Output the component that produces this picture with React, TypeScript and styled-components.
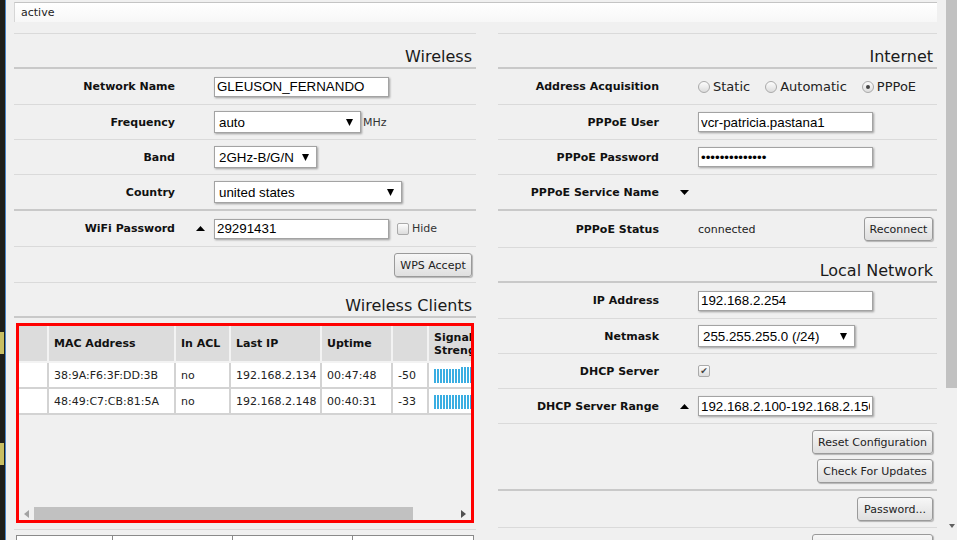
import React from 'react';
import styled, { createGlobalStyle } from 'styled-components';

const UI = `"DejaVu Sans", Verdana, sans-serif`;
const ARIAL = `"Liberation Sans", Arial, sans-serif`;

const GlobalStyle = createGlobalStyle`
  html, body { margin: 0; padding: 0; background: #f0f0f0; overflow: hidden; }
  body { font-family: ${UI}; font-size: 11px; color: #222; }
  * { box-sizing: border-box; }
`;

const Shell = styled.div`
  display: flex;
  width: 957px;
  height: 540px;
  overflow: hidden;
  background: #f0f0f0;
`;

const Sidebar = styled.div`
  flex: none;
  width: 6px;
  background: #1f1f1b;
  border-right: 1px solid #4a86c8;
  display: flex;
  flex-direction: column;
`;

const SideTab = styled.div<{ $gap: number }>`
  width: 4px;
  height: 22px;
  margin-top: ${(p) => p.$gap}px;
  background: #c9bf63;
`;

const Main = styled.main`
  flex: 1;
  min-width: 0;
  padding: 2px 9px 0 8px;
  display: flex;
  flex-direction: column;
`;

const StatusBar = styled.div`
  flex: none;
  height: 20px;
  border-top: 1px solid #c4c4c4;
  border-left: 1px solid #d6d6d6;
  background: linear-gradient(#ffffff, #f7f7f7);
  padding-left: 6px;
  font-size: 11px;
  line-height: 20px;
  color: #222;
`;

const Columns = styled.div`
  display: grid;
  grid-template-columns: 462px 439px;
  column-gap: 22px;
  align-items: start;
`;

const Column = styled.section`
  display: flex;
  flex-direction: column;
`;

const Spacer = styled.div`
  height: 12px;
  border-bottom: 1px solid #dadada;
`;

const Title = styled.h2<{ $h: number }>`
  margin: 0;
  height: ${(p) => p.$h}px;
  display: flex;
  align-items: flex-end;
  justify-content: flex-end;
  padding: 0 4px 0 0;
  border-bottom: 2px solid #c9c9c9;
  font-size: 16px;
  font-weight: normal;
  line-height: 20px;
  color: #1a1a1a;
`;

const Row = styled.div<{ $h: number; $heavy?: boolean }>`
  display: grid;
  grid-template-columns: 161px 39px 1fr;
  align-items: center;
  height: ${(p) => p.$h}px;
  padding-right: 4px;
  border-bottom: ${(p) => (p.$heavy ? '2px solid #c9c9c9' : '1px solid #dadada')};
`;

const ActionRow = styled.div<{ $h: number; $heavy?: boolean }>`
  display: flex;
  flex-direction: column;
  align-items: flex-end;
  justify-content: flex-start;
  gap: 5px;
  height: ${(p) => p.$h}px;
  padding: 6px 4px 0 0;
  border-bottom: ${(p) => (p.$heavy ? '2px solid #c9c9c9' : '1px solid #dadada')};
`;

const Label = styled.div`
  text-align: right;
  font-weight: bold;
  font-size: 11px;
  color: #111;
  white-space: nowrap;
`;

const ArrowCell = styled.div`
  display: flex;
  align-items: center;
  padding-left: 21px;
`;

const Value = styled.div`
  display: flex;
  align-items: center;
  min-width: 0;
`;

const TextInput = styled.input<{ $w: number }>`
  width: ${(p) => p.$w}px;
  height: 20px;
  margin: 0;
  padding: 0 2px;
  border: 1px solid #a3a3a3;
  border-radius: 0;
  box-shadow: 1px 1px 2px rgba(0, 0, 0, 0.35);
  background: #fff;
  font-family: ${ARIAL};
  font-size: 13.33px;
  color: #000;
  outline: none;
`;

const SelectBox = styled.div<{ $w: number }>`
  width: ${(p) => p.$w}px;
  height: 22px;
  display: flex;
  align-items: center;
  justify-content: space-between;
  padding: 0 7px 0 4px;
  border: 1px solid #a3a3a3;
  box-shadow: 1px 1px 2px rgba(0, 0, 0, 0.35);
  background: #fff;
  font-family: ${ARIAL};
  font-size: 13.33px;
  color: #000;
  white-space: nowrap;
`;

const Unit = styled.span`
  margin-left: 2px;
  font-size: 11px;
  color: #333;
`;

const Plain = styled.span`
  font-size: 11px;
  color: #222;
`;

const Button = styled.button<{ $w?: number }>`
  height: 24px;
  ${(p) => (p.$w ? `width: ${p.$w}px;` : '')}
  margin: 0;
  padding: 0 4px;
  border: 1px solid #9a9a9a;
  border-radius: 3px;
  background: linear-gradient(#f7f7f7, #dfdfdf);
  box-shadow: 1px 1px 1px rgba(0, 0, 0, 0.25);
  font-family: ${UI};
  font-size: 11px;
  color: #222;
  white-space: nowrap;
`;

const PushRight = styled.div`
  margin-left: auto;
  display: flex;
`;

const RadioGroup = styled.div`
  display: flex;
  align-items: center;
`;

const RadioItem = styled.label`
  display: flex;
  align-items: center;
  gap: 3px;
  margin-right: 15px;
  font-size: 13px;
  color: #222;
`;

const RadioDot = styled.span<{ $checked?: boolean }>`
  position: relative;
  width: 12px;
  height: 12px;
  border-radius: 50%;
  border: 1px solid #aaaaaa;
  background: linear-gradient(#fdfdfd, #dcdcdc);
  &::after {
    content: '';
    display: ${(p) => (p.$checked ? 'block' : 'none')};
    position: absolute;
    left: 3px;
    top: 3px;
    width: 4px;
    height: 4px;
    border-radius: 50%;
    background: #444;
  }
`;

const CheckBox = styled.span<{ $ml?: number }>`
  display: inline-flex;
  align-items: center;
  justify-content: center;
  width: 12px;
  height: 12px;
  margin-left: ${(p) => p.$ml ?? 0}px;
  border: 1px solid #aaaaaa;
  border-radius: 2px;
  background: linear-gradient(#fdfdfd, #dcdcdc);
  font-size: 9px;
  line-height: 1;
  color: #444;
`;

const CheckLabel = styled.span`
  margin-left: 3px;
  font-size: 11px;
  color: #333;
`;

/* ---- clients table ---- */

const TableBlock = styled.div`
  padding: 5px 2px 6px 2px;
  border-bottom: 1px solid #dadada;
`;

const TableFrame = styled.div`
  height: 200px;
  border: 3px solid #ff0000;
  background: #f0f0f0;
  display: flex;
  flex-direction: column;
`;

const TableViewport = styled.div`
  flex: 1;
  overflow: hidden;
`;

const ClientTable = styled.table`
  width: 490px;
  table-layout: fixed;
  border-collapse: separate;
  border-spacing: 0;
`;

const Th = styled.th`
  height: 37px;
  padding: 0 5px;
  background: #dcdcdc;
  border-right: 2px solid #f3f3f3;
  border-bottom: 2px solid #f3f3f3;
  text-align: left;
  vertical-align: middle;
  font-weight: bold;
  font-size: 11px;
  line-height: 13px;
  color: #111;
  overflow: hidden;
`;

const Td = styled.td`
  height: 26px;
  padding: 0 5px;
  background: #fff;
  border-right: 2px solid #d3d3d3;
  border-bottom: 2px solid #d3d3d3;
  font-size: 11px;
  color: #222;
  white-space: nowrap;
  overflow: hidden;
`;

const Bars = styled.div`
  display: flex;
  align-items: flex-end;
  gap: 1px;
  height: 16px;
`;

const Bar = styled.span<{ $tall?: boolean }>`
  flex: none;
  width: 2px;
  height: ${(p) => (p.$tall ? 16 : 14)}px;
  background: #3aaee2;
`;

const HScroll = styled.div`
  flex: none;
  height: 13px;
  display: flex;
  align-items: stretch;
  background: #f0f0f0;
`;

const ScrollArrow = styled.div`
  flex: none;
  width: 15px;
  display: flex;
  align-items: center;
  justify-content: center;
`;

const HTrack = styled.div`
  flex: 1;
  display: flex;
`;

const HThumb = styled.div`
  width: 379px;
  background: #c1c1c1;
`;

const BottomTable = styled.div`
  margin: 5px 2px 0 2px;
  height: 30px;
  display: grid;
  grid-template-columns: 96px 120px 120px 1fr;
  border: 1px solid #8a8a8a;
  background: #fff;
`;

const BottomCell = styled.div`
  border-right: 1px solid #8a8a8a;
  &:last-child { border-right: none; }
`;

/* ---- page scrollbar ---- */

const PageScroll = styled.div`
  flex: none;
  width: 11px;
  display: flex;
  flex-direction: column;
  align-items: center;
  background: #f0f0f0;
`;

const PageThumb = styled.div`
  width: 11px;
  height: 388px;
  background: #c1c1c1;
`;

const PageScrollFill = styled.div`
  flex: 1;
`;

const PageScrollArrow = styled.div`
  height: 16px;
  display: flex;
  align-items: flex-start;
  justify-content: center;
`;

const Tri = ({ dir, w = 10, h = 5, color = '#000' }: { dir: 'up' | 'down' | 'left' | 'right'; w?: number; h?: number; color?: string }) => {
  const pts =
    dir === 'up'
      ? `0,${h} ${w},${h} ${w / 2},0`
      : dir === 'down'
      ? `0,0 ${w},0 ${w / 2},${h}`
      : dir === 'left'
      ? `${w},0 ${w},${h} 0,${h / 2}`
      : `0,0 0,${h} ${w},${h / 2}`;
  return (
    <svg width={w} height={h} viewBox={`0 0 ${w} ${h}`} style={{ display: 'block' }}>
      <polygon points={pts} fill={color} />
    </svg>
  );
};

const Select = ({ w, children }: { w: number; children: React.ReactNode }) => (
  <SelectBox $w={w}>
    <span>{children}</span>
    <Tri dir="down" w={7} h={7} />
  </SelectBox>
);

const clients = [
  { mac: '38:9A:F6:3F:DD:3B', acl: 'no', ip: '192.168.2.134', up: '00:47:48', dbm: '-50', tall: 9 },
  { mac: '48:49:C7:CB:81:5A', acl: 'no', ip: '192.168.2.148', up: '00:40:31', dbm: '-33', tall: 99 },
];

export default function App() {
  return (
    <Shell>
      <GlobalStyle />
      <Sidebar>
        <SideTab $gap={332} />
        <SideTab $gap={89} />
      </Sidebar>
      <Main>
        <StatusBar>active</StatusBar>
        <Columns>
          <Column>
            <Spacer />
            <Title $h={35}>Wireless</Title>
            <Row $h={36}>
              <Label>Network Name</Label>
              <ArrowCell />
              <Value>
                <TextInput $w={175} readOnly value="GLEUSON_FERNANDO" />
              </Value>
            </Row>
            <Row $h={35}>
              <Label>Frequency</Label>
              <ArrowCell />
              <Value>
                <Select w={147}>auto</Select>
                <Unit>MHz</Unit>
              </Value>
            </Row>
            <Row $h={35}>
              <Label>Band</Label>
              <ArrowCell />
              <Value>
                <Select w={103}>2GHz-B/G/N</Select>
              </Value>
            </Row>
            <Row $h={36} $heavy>
              <Label>Country</Label>
              <ArrowCell />
              <Value>
                <Select w={188}>united states</Select>
              </Value>
            </Row>
            <Row $h={36}>
              <Label>WiFi Password</Label>
              <ArrowCell>
                <Tri dir="up" w={9} h={5} />
              </ArrowCell>
              <Value>
                <TextInput $w={175} readOnly value="29291431" />
                <CheckBox $ml={8} />
                <CheckLabel>Hide</CheckLabel>
              </Value>
            </Row>
            <ActionRow $h={36}>
              <Button $w={78}>WPS Accept</Button>
            </ActionRow>
            <Title $h={35}>Wireless Clients</Title>
            <TableBlock>
              <TableFrame>
                <TableViewport>
                  <ClientTable>
                    <colgroup>
                      <col style={{ width: 30 }} />
                      <col style={{ width: 127 }} />
                      <col style={{ width: 55 }} />
                      <col style={{ width: 91 }} />
                      <col style={{ width: 71 }} />
                      <col style={{ width: 36 }} />
                      <col style={{ width: 80 }} />
                    </colgroup>
                    <thead>
                      <tr>
                        <Th />
                        <Th>MAC Address</Th>
                        <Th>In ACL</Th>
                        <Th>Last IP</Th>
                        <Th>Uptime</Th>
                        <Th />
                        <Th>Signal Strength</Th>
                      </tr>
                    </thead>
                    <tbody>
                      {clients.map((c) => (
                        <tr key={c.mac}>
                          <Td />
                          <Td>{c.mac}</Td>
                          <Td>{c.acl}</Td>
                          <Td>{c.ip}</Td>
                          <Td>{c.up}</Td>
                          <Td>{c.dbm}</Td>
                          <Td>
                            <Bars>
                              {Array.from({ length: 22 }).map((_, i) => (
                                <Bar key={i} $tall={i >= c.tall} />
                              ))}
                            </Bars>
                          </Td>
                        </tr>
                      ))}
                    </tbody>
                  </ClientTable>
                </TableViewport>
                <HScroll>
                  <ScrollArrow>
                    <Tri dir="left" w={5} h={8} color="#a3a3a3" />
                  </ScrollArrow>
                  <HTrack>
                    <HThumb />
                  </HTrack>
                  <ScrollArrow>
                    <Tri dir="right" w={5} h={8} color="#505050" />
                  </ScrollArrow>
                </HScroll>
              </TableFrame>
            </TableBlock>
            <BottomTable>
              <BottomCell />
              <BottomCell />
              <BottomCell />
              <BottomCell />
            </BottomTable>
          </Column>

          <Column>
            <Spacer />
            <Title $h={35}>Internet</Title>
            <Row $h={36}>
              <Label>Address Acquisition</Label>
              <ArrowCell />
              <Value>
                <RadioGroup>
                  <RadioItem>
                    <RadioDot />
                    Static
                  </RadioItem>
                  <RadioItem>
                    <RadioDot />
                    Automatic
                  </RadioItem>
                  <RadioItem>
                    <RadioDot $checked />
                    PPPoE
                  </RadioItem>
                </RadioGroup>
              </Value>
            </Row>
            <Row $h={35}>
              <Label>PPPoE User</Label>
              <ArrowCell />
              <Value>
                <TextInput $w={175} readOnly value="vcr-patricia.pastana1" />
              </Value>
            </Row>
            <Row $h={35}>
              <Label>PPPoE Password</Label>
              <ArrowCell />
              <Value>
                <TextInput $w={175} readOnly type="password" value="pppoepassword1" />
              </Value>
            </Row>
            <Row $h={36} $heavy>
              <Label>PPPoE Service Name</Label>
              <ArrowCell>
                <Tri dir="down" w={9} h={5} />
              </ArrowCell>
              <Value />
            </Row>
            <Row $h={37}>
              <Label>PPPoE Status</Label>
              <ArrowCell />
              <Value>
                <Plain>connected</Plain>
                <PushRight>
                  <Button $w={69}>Reconnect</Button>
                </PushRight>
              </Value>
            </Row>
            <Title $h={35}>Local Network</Title>
            <Row $h={36}>
              <Label>IP Address</Label>
              <ArrowCell />
              <Value>
                <TextInput $w={175} readOnly value="192.168.2.254" />
              </Value>
            </Row>
            <Row $h={35}>
              <Label>Netmask</Label>
              <ArrowCell />
              <Value>
                <Select w={157}>255.255.255.0 (/24)</Select>
              </Value>
            </Row>
            <Row $h={35}>
              <Label>DHCP Server</Label>
              <ArrowCell />
              <Value>
                <CheckBox>✔</CheckBox>
              </Value>
            </Row>
            <Row $h={35}>
              <Label>DHCP Server Range</Label>
              <ArrowCell>
                <Tri dir="up" w={9} h={5} />
              </ArrowCell>
              <Value>
                <TextInput $w={175} readOnly value="192.168.2.100-192.168.2.150" />
              </Value>
            </Row>
            <ActionRow $h={67} $heavy>
              <Button $w={121}>Reset Configuration</Button>
              <Button $w={116}>Check For Updates</Button>
            </ActionRow>
            <ActionRow $h={37}>
              <Button $w={76}>Password...</Button>
            </ActionRow>
            <ActionRow $h={40}>
              <Button $w={121} aria-label="more" />
            </ActionRow>
          </Column>
        </Columns>
      </Main>
      <PageScroll>
        <PageThumb />
        <PageScrollFill />
        <PageScrollArrow>
          <Tri dir="down" w={6} h={4} color="#606060" />
        </PageScrollArrow>
      </PageScroll>
    </Shell>
  );
}
